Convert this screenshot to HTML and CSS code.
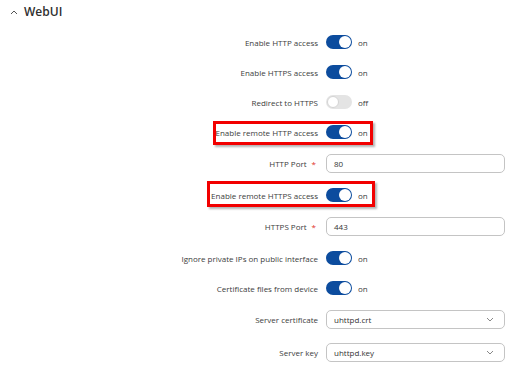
FILE: index.html
```html
<!DOCTYPE html>
<html>
<head>
<meta charset="utf-8">
<link rel="stylesheet" href="styles.css">
</head>
<body>
<div class="section">
  <div class="section-head">
    <svg class="caret" width="8" height="6" viewBox="0 0 8 6"><polyline points="1,5 4,2 7,5" fill="none" stroke="#555" stroke-width="1"/></svg>
    <span class="title">WebUI</span>
  </div>
  <div class="form">
    <div class="row">
      <label class="lbl">Enable HTTP access</label>
      <div class="ctl"><span class="tgl on"><span class="knob"></span></span><span class="state">on</span></div>
    </div>
    <div class="row">
      <label class="lbl">Enable HTTPS access</label>
      <div class="ctl"><span class="tgl on"><span class="knob"></span></span><span class="state">on</span></div>
    </div>
    <div class="row">
      <label class="lbl">Redirect to HTTPS</label>
      <div class="ctl"><span class="tgl off"><span class="knob"></span></span><span class="state">off</span></div>
    </div>
    <div class="row marked">
      <label class="lbl">Enable remote HTTP access</label>
      <div class="ctl"><span class="tgl on"><span class="knob"></span></span><span class="state">on</span></div>
      <div class="mark mark-1"></div>
    </div>
    <div class="row tall">
      <label class="lbl">HTTP Port<span class="req">*</span></label>
      <div class="ctl"><div class="field">80</div></div>
    </div>
    <div class="row marked">
      <label class="lbl">Enable remote HTTPS access</label>
      <div class="ctl"><span class="tgl on"><span class="knob"></span></span><span class="state">on</span></div>
      <div class="mark mark-2"></div>
    </div>
    <div class="row tall">
      <label class="lbl">HTTPS Port<span class="req">*</span></label>
      <div class="ctl"><div class="field">443</div></div>
    </div>
    <div class="row short">
      <label class="lbl">Ignore private IPs on public interface</label>
      <div class="ctl"><span class="tgl on"><span class="knob"></span></span><span class="state">on</span></div>
    </div>
    <div class="row short">
      <label class="lbl">Certificate files from device</label>
      <div class="ctl"><span class="tgl on"><span class="knob"></span></span><span class="state">on</span></div>
    </div>
    <div class="row tall">
      <label class="lbl">Server certificate</label>
      <div class="ctl"><div class="field select"><span>uhttpd.crt</span><svg width="8" height="5" viewBox="0 0 8 5"><polyline points="1,1 4,4 7,1" fill="none" stroke="#888" stroke-width="1"/></svg></div></div>
    </div>
    <div class="row tall">
      <label class="lbl">Server key</label>
      <div class="ctl"><div class="field select"><span>uhttpd.key</span><svg width="8" height="5" viewBox="0 0 8 5"><polyline points="1,1 4,4 7,1" fill="none" stroke="#888" stroke-width="1"/></svg></div></div>
    </div>
  </div>
</div>
</body>
</html>
```
FILE: styles.css
```css
html, body {
  margin: 0;
  padding: 0;
  background: #fff;
}
body {
  font-family: "Open Sans", "Noto Sans", sans-serif;
  color: #404040;
  width: 517px;
  height: 372px;
  overflow: hidden;
}
.section-head {
  height: 27px;
  display: flex;
  align-items: center;
  padding-left: 10px;
  gap: 6px;
  padding-bottom: 4px;
  box-sizing: border-box;
}
.caret {
  display: block;
}
.title {
  font-size: 12px;
  font-weight: 600;
  color: #2f2f2f;
}
.form {
  display: flex;
  flex-direction: column;
}
.row {
  display: grid;
  grid-template-columns: 318px 179px;
  column-gap: 8px;
  align-items: center;
  height: 30px;
  position: relative;
}
.row.tall {
  height: 33px;
}
.row.short {
  height: 30px;
}
.lbl {
  text-align: right;
  font-size: 8px;
  color: #3c3c3c;
  white-space: nowrap;
}
.req {
  color: #e0302a;
  margin-left: 5px;
  margin-right: 2px;
}
.ctl {
  display: flex;
  align-items: center;
}
.tgl {
  width: 26px;
  height: 14px;
  border-radius: 7px;
  box-sizing: border-box;
  display: flex;
  align-items: center;
  padding: 1px;
}
.tgl.on {
  background: #0c4c9e;
  justify-content: flex-end;
}
.tgl.off {
  background: #e4e4e4;
  justify-content: flex-start;
}
.knob {
  width: 12px;
  height: 12px;
  border-radius: 50%;
  background: #fff;
  box-sizing: border-box;
}
.tgl.off .knob {
  border: 1px solid #d4d4d4;
}
.state {
  font-size: 8px;
  margin-left: 6px;
  color: #3c3c3c;
}
.field {
  width: 179px;
  height: 19px;
  box-sizing: border-box;
  border: 1px solid #c4c4c4;
  border-radius: 5px;
  font-size: 8px;
  color: #333;
  padding-left: 7px;
  display: flex;
  align-items: center;
}
.field.select {
  justify-content: space-between;
  padding-right: 10px;
}
.field.select svg {
  display: block;
}
.mark {
  position: absolute;
  border: 3px solid #f20000;
  box-sizing: border-box;
  box-shadow: 2px 2px 2px rgba(0, 0, 0, 0.3);
  pointer-events: none;
}
.mark-1 {
  left: 213px;
  top: 4px;
  width: 160px;
  height: 24px;
}
.mark-2 {
  left: 207px;
  top: 1px;
  width: 168px;
  height: 26px;
}
```
